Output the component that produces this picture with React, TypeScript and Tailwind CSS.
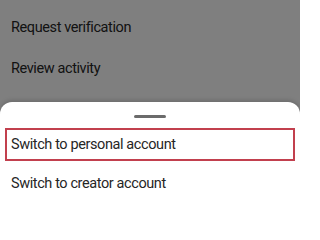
import React from 'react'

const behind = ['Request verification', 'Review activity', 'Switch account type']

export default function App() {
  return (
    <div
      className="relative h-[211px] w-[300px] overflow-hidden bg-white"
      style={{ fontFamily: 'Roboto, "Liberation Sans", sans-serif' }}
    >
      {/* settings list behind the sheet */}
      <div className="flex flex-col pt-[7px]">
        {behind.map((label) => (
          <div key={label} className="flex h-[41px] items-center px-[11px] text-[14.5px] tracking-[-0.4px] text-[#262626]">
            {label}
          </div>
        ))}
      </div>

      {/* dim overlay */}
      <div className="absolute inset-0 bg-black/50" />

      {/* bottom sheet */}
      <div className="absolute inset-x-0 top-[102px] bottom-0 rounded-t-[12px] bg-white shadow-[0_-2px_4px_rgba(0,0,0,0.15)]">
        <div className="flex justify-center pt-[13px]">
          <div className="h-[3px] w-[32px] rounded-full bg-[#6b6b6b]" />
        </div>
        <div className="flex flex-col px-[5px] pt-[10px]">
          <div className="flex h-[33px] items-center border-2 border-[#c2404e] pl-[4px] text-[14.5px] tracking-[-0.4px] text-[#262626]">
            Switch to personal account
          </div>
          <div className="flex h-[46px] items-center pl-[6px] text-[14.5px] tracking-[-0.4px] text-[#262626]">
            Switch to creator account
          </div>
        </div>
      </div>
    </div>
  )
}
